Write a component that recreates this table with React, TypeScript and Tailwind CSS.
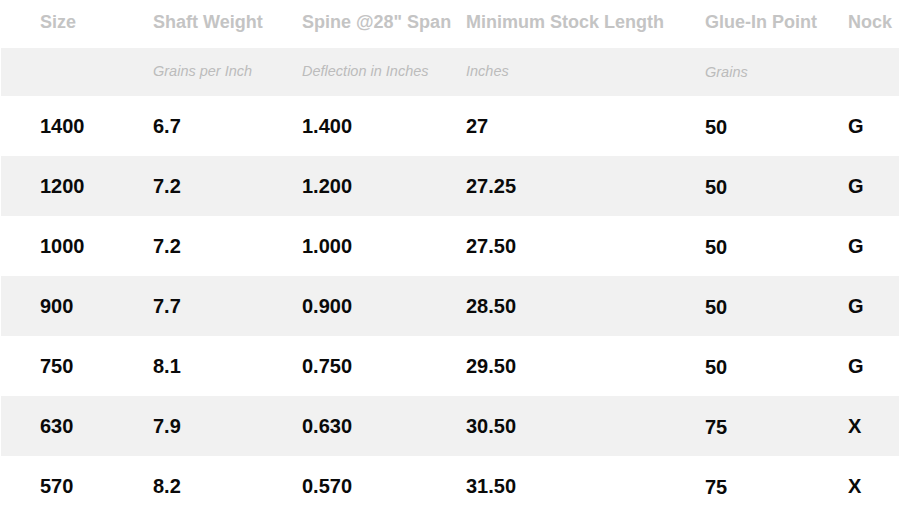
import React from 'react'

const rows = [
  ['1400', '6.7', '1.400', '27', '50', 'G'],
  ['1200', '7.2', '1.200', '27.25', '50', 'G'],
  ['1000', '7.2', '1.000', '27.50', '50', 'G'],
  ['900', '7.7', '0.900', '28.50', '50', 'G'],
  ['750', '8.1', '0.750', '29.50', '50', 'G'],
  ['630', '7.9', '0.630', '30.50', '75', 'X'],
  ['570', '8.2', '0.570', '31.50', '75', 'X']
]

const headers = ['Size', 'Shaft Weight', 'Spine @28" Span', 'Minimum Stock Length', 'Glue-In Point', 'Nock']
const units = ['', 'Grains per Inch', 'Deflection in Inches', 'Inches', 'Grains', '']

const cols = 'grid grid-cols-[152px_149px_164px_239px_143px_1fr]'

const App: React.FC = () => {
  return (
    <div className="h-[510px] w-[899px] overflow-hidden bg-white pl-px font-['Liberation_Sans',Arial,sans-serif]">
      <div className={`${cols} h-12 items-start pt-[9px] text-[18px] font-bold whitespace-nowrap text-[#c4c4c4]`}>
        {headers.map((h, i) => (
          <div key={h} className={i === 0 ? 'pl-[39px]' : ''}>
            {h}
          </div>
        ))}
      </div>

      <div className={`${cols} h-12 items-center bg-[#f1f1f1] text-[14.5px] italic text-[#bcbcbc]`}>
        {units.map((u, i) => (
          <div key={i} className={i === 0 ? 'pl-[39px]' : i === 4 ? 'pt-[2px]' : ''}>
            {u}
          </div>
        ))}
      </div>

      {rows.map((r, ri) => (
        <div
          key={r[0]}
          className={`${cols} h-[60px] items-center text-[20px] font-bold text-[#0a0a0a] ${ri % 2 === 1 ? 'bg-[#f1f1f1]' : 'bg-white'}`}
        >
          {r.map((v, i) => (
            <div key={i} className={i === 0 ? 'pl-[39px]' : i === 4 ? 'pt-[2px]' : ''}>
              {v}
            </div>
          ))}
        </div>
      ))}
    </div>
  )
}

export default App
